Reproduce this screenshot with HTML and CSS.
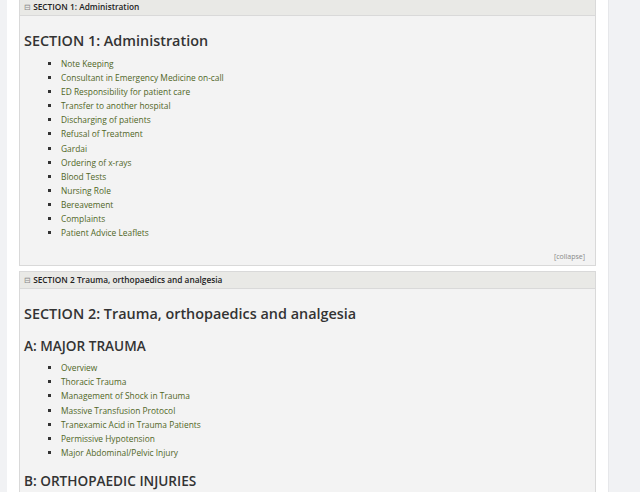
FILE: index.html
```html
<!DOCTYPE html>
<html lang="en">
<head>
    <meta charset="UTF-8">
    <meta name="viewport" content="width=device-width, initial-scale=1.0">
    <title>ED Guidelines</title>
    <link rel="stylesheet" href="styles.css">
</head>
<body>
    <div class="page">
        <div class="left-strip"></div>

        <div class="main">
            <div class="section">
                <div class="section-header">
                    <span class="toggle">&#8863;</span>
                    <span>SECTION 1: Administration</span>
                </div>
                <div class="section-body">
                    <h2>SECTION 1: Administration</h2>
                    <ul>
                        <li><a href="#">Note Keeping</a></li>
                        <li><a href="#">Consultant in Emergency Medicine on-call</a></li>
                        <li><a href="#">ED Responsibility for patient care</a></li>
                        <li><a href="#">Transfer to another hospital</a></li>
                        <li><a href="#">Discharging of patients</a></li>
                        <li><a href="#">Refusal of Treatment</a></li>
                        <li><a href="#">Gardai</a></li>
                        <li><a href="#">Ordering of x-rays</a></li>
                        <li><a href="#">Blood Tests</a></li>
                        <li><a href="#">Nursing Role</a></li>
                        <li><a href="#">Bereavement</a></li>
                        <li><a href="#">Complaints</a></li>
                        <li><a href="#">Patient Advice Leaflets</a></li>
                    </ul>
                    <div class="collapse"><a href="#">[collapse]</a></div>
                </div>
            </div>

            <div class="section">
                <div class="section-header">
                    <span class="toggle">&#8863;</span>
                    <span>SECTION 2 Trauma, orthopaedics and analgesia</span>
                </div>
                <div class="section-body">
                    <h2>SECTION 2: Trauma, orthopaedics and analgesia</h2>
                    <h3>A: MAJOR TRAUMA</h3>
                    <ul>
                        <li><a href="#">Overview</a></li>
                        <li><a href="#">Thoracic Trauma</a></li>
                        <li><a href="#">Management of Shock in Trauma</a></li>
                        <li><a href="#">Massive Transfusion Protocol</a></li>
                        <li><a href="#">Tranexamic Acid in Trauma Patients</a></li>
                        <li><a href="#">Permissive Hypotension</a></li>
                        <li><a href="#">Major Abdominal/Pelvic Injury</a></li>
                    </ul>
                    <h3>B: ORTHOPAEDIC INJURIES</h3>
                </div>
            </div>
        </div>

        <div class="sidebar"></div>
    </div>
</body>
</html>
```

FILE: styles.css
```css
body {
    margin: 0;
    font-family: "Open Sans", "Noto Sans", sans-serif;
    background-color: white;
    overflow: hidden;
    height: 492px;
}

.page {
    display: flex;
    height: 492px;
}

.left-strip {
    width: 7px;
    background-color: #f1f2f4;
}

.main {
    width: 577px;
    padding: 0 12px;
    margin-top: -2px;
}

.sidebar {
    flex: 1;
    background-color: #f1f2f4;
    border-left: 1px solid #e6e7ea;
}

.section {
    border: 1px solid #d9d9d9;
    background-color: #f3f3f3;
    margin-bottom: 5px;
}

.section-header {
    background-color: #e9e9e6;
    border-bottom: 1px solid #d9d9d9;
    font-size: 8.3px;
    font-weight: 600;
    color: #222;
    padding: 4px;
    line-height: 8px;
}

.toggle {
    color: #888;
    font-weight: normal;
    font-size: 8px;
}

.section-body {
    padding: 15px 4px 3px 4px;
}

h2 {
    font-size: 14.4px;
    font-weight: 600;
    color: #333;
    margin: 0 0 6px 0;
    line-height: 20px;
}

h3 {
    font-size: 13.6px;
    font-weight: 600;
    color: #333;
    margin: 0 0 5px 0;
    line-height: 20px;
}

h2 + h3 {
    margin-top: 12px;
}

ul {
    list-style-type: square;
    margin: 0 0 11px 0;
    padding-left: 37px;
    font-size: 8.4px;
    line-height: 14.1px;
    color: #333;
}

ul + .collapse {
    margin-top: 12px;
}

li a {
    color: #50661f;
    text-decoration: none;
}

.collapse {
    text-align: right;
    font-size: 7px;
    line-height: 10px;
    padding-right: 6px;
}

.collapse a {
    color: #888;
    text-decoration: none;
}
```
